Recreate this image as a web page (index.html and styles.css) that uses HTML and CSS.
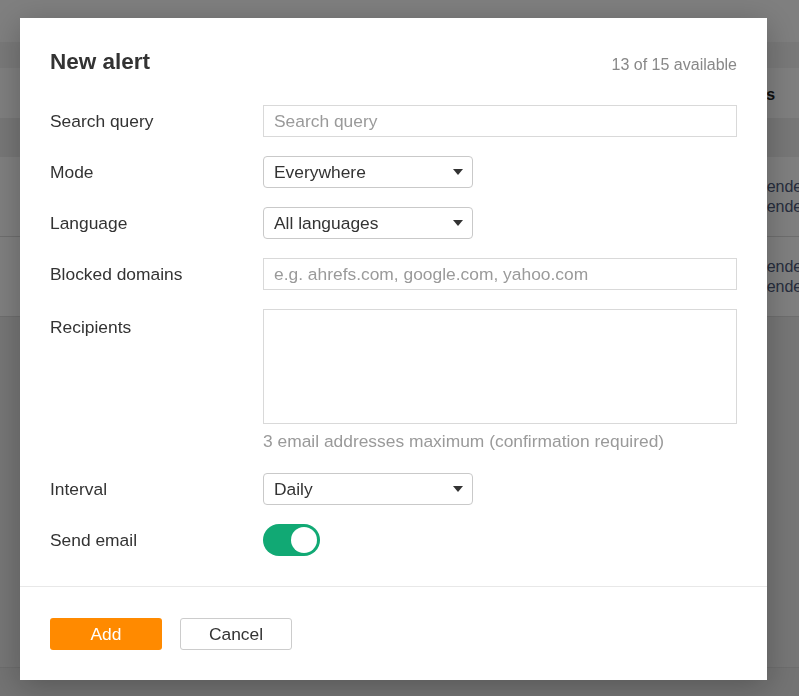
FILE: index.html
```html
<!DOCTYPE html>
<html lang="en">
<head>
<meta charset="utf-8">
<title>New alert</title>
<link rel="stylesheet" href="styles.css">
</head>
<body>
<div class="page">
  <div class="topbar"></div>
  <div class="band"></div>
  <div class="thead"><span class="th">Mentions</span></div>
  <div class="band2"></div>
  <div class="trow"><div class="cell"><div>Sender</div><div>Sender</div></div></div>
  <div class="trow"><div class="cell"><div>Sender</div><div>Sender</div></div></div>
  <div class="filler"></div>
</div>
<div class="overlay"></div>
<div class="modal">
  <div class="modal-body">
    <div class="modal-head">
      <h1 class="title">New alert</h1>
      <span class="count">13 of 15 available</span>
    </div>
    <div class="rows">
      <div class="row">
        <div class="label">Search query</div>
        <input class="input" type="text" placeholder="Search query">
      </div>
      <div class="row">
        <div class="label">Mode</div>
        <div class="select-wrap">
          <select class="select"><option>Everywhere</option></select>
          <svg class="arrow" width="10" height="6" viewBox="0 0 10 6"><path d="M0 0h10L5 6z" fill="#333"/></svg>
        </div>
      </div>
      <div class="row">
        <div class="label">Language</div>
        <div class="select-wrap">
          <select class="select"><option>All languages</option></select>
          <svg class="arrow" width="10" height="6" viewBox="0 0 10 6"><path d="M0 0h10L5 6z" fill="#333"/></svg>
        </div>
      </div>
      <div class="row">
        <div class="label">Blocked domains</div>
        <input class="input" type="text" placeholder="e.g. ahrefs.com, google.com, yahoo.com">
      </div>
      <div class="row row-top">
        <div class="label label-top">Recipients</div>
        <div class="field-col">
          <textarea class="textarea"></textarea>
          <div class="hint">3 email addresses maximum (confirmation required)</div>
        </div>
      </div>
      <div class="row">
        <div class="label">Interval</div>
        <div class="select-wrap">
          <select class="select"><option>Daily</option></select>
          <svg class="arrow" width="10" height="6" viewBox="0 0 10 6"><path d="M0 0h10L5 6z" fill="#333"/></svg>
        </div>
      </div>
      <div class="row">
        <div class="label">Send email</div>
        <div class="toggle"><span class="knob"></span></div>
      </div>
    </div>
  </div>
  <div class="modal-foot">
    <button class="btn btn-add" type="button">Add</button>
    <button class="btn btn-cancel" type="button">Cancel</button>
  </div>
</div>
</body>
</html>
```
FILE: styles.css
```css
html, body {
  margin: 0;
  padding: 0;
}
body {
  background: #e6e6e6;
  font-family: "Liberation Sans", Arial, sans-serif;
  height: 696px;
  overflow: hidden;
}
.page {
  width: 100%;
}
.topbar {
  height: 42px;
  background: #ffffff;
}
.band {
  height: 26px;
  background: #f3f3f3;
}
.thead {
  height: 50px;
  background: #ffffff;
  padding-left: 705px;
  box-sizing: border-box;
}
.th {
  display: block;
  font-weight: bold;
  font-size: 16px;
  line-height: 54px;
  color: #222;
  white-space: nowrap;
}
.band2 {
  height: 39px;
  background: #eeeeee;
}
.trow {
  height: 80px;
  box-sizing: border-box;
  background: #ffffff;
  border-bottom: 1px solid #dcdcdc;
  padding-left: 756px;
  display: flex;
  align-items: center;
}
.cell {
  font-size: 16px;
  line-height: 19.5px;
  color: #4e5a7a;
  white-space: nowrap;
}
.filler {
  height: 350px;
  background: #ececec;
  border-bottom: 1px solid #dadada;
}
.overlay {
  position: fixed;
  inset: 0;
  background: rgba(0, 0, 0, 0.5);
}
.modal {
  position: fixed;
  left: 20px;
  top: 18px;
  width: 747px;
  height: 662px;
  background: #ffffff;
  box-shadow: 0 6px 30px rgba(0, 0, 0, 0.25);
  display: flex;
  flex-direction: column;
  color: #333;
  font-family: "Liberation Sans", Arial, sans-serif;
}
.modal-body {
  padding: 31px 30px 30px;
}
.modal-head {
  display: flex;
  justify-content: space-between;
  align-items: baseline;
  height: 26px;
}
.title {
  margin: 0;
  font-size: 22.5px;
  line-height: 26px;
  font-weight: bold;
  color: #333;
}
.count {
  font-size: 16px;
  color: #888;
  position: relative;
  top: 1px;
}
.rows {
  margin-top: 30px;
  display: flex;
  flex-direction: column;
  gap: 19px;
}
.row {
  display: flex;
  align-items: center;
  min-height: 32px;
}
.row-top {
  align-items: flex-start;
}
.label {
  width: 213px;
  flex: none;
  font-size: 17.4px;
  line-height: 32px;
  color: #333;
}
.label-top {
  padding-top: 2px;
}
.input {
  width: 474px;
  height: 32px;
  box-sizing: border-box;
  border: 1px solid #d9d9d9;
  border-radius: 0;
  padding: 0 10px;
  margin: 0;
  font-family: "Liberation Sans", Arial, sans-serif;
  font-size: 17.4px;
  color: #333;
  outline: none;
}
.input::placeholder {
  color: #9a9a9a;
}
.select-wrap {
  position: relative;
  width: 210px;
  height: 32px;
}
.select {
  appearance: none;
  -webkit-appearance: none;
  width: 210px;
  height: 32px;
  box-sizing: border-box;
  border: 1px solid #c9c9c9;
  border-radius: 4px;
  background: #ffffff;
  padding: 0 10px;
  margin: 0;
  font-family: "Liberation Sans", Arial, sans-serif;
  font-size: 17.4px;
  color: #333;
  outline: none;
}
.arrow {
  position: absolute;
  right: 10px;
  top: 13px;
  pointer-events: none;
}
.field-col {
  display: flex;
  flex-direction: column;
}
.textarea {
  width: 474px;
  height: 115px;
  box-sizing: border-box;
  border: 1px solid #d9d9d9;
  border-radius: 0;
  margin: 0;
  padding: 6px 10px;
  resize: none;
  font-family: "Liberation Sans", Arial, sans-serif;
  font-size: 17.4px;
  outline: none;
  display: block;
}
.hint {
  margin-top: 4px;
  font-size: 17.4px;
  line-height: 26px;
  color: #9a9a9a;
  white-space: nowrap;
}
.toggle {
  width: 57px;
  height: 32px;
  box-sizing: border-box;
  border-radius: 16px;
  background: #11a974;
  padding: 3px;
  display: flex;
  justify-content: flex-end;
  align-items: center;
}
.knob {
  width: 26px;
  height: 26px;
  border-radius: 50%;
  background: #ffffff;
}
.modal-foot {
  border-top: 1px solid #e8e8e8;
  padding: 31px 30px 30px;
  display: flex;
  gap: 18px;
}
.btn {
  width: 112px;
  height: 32px;
  box-sizing: border-box;
  border-radius: 3px;
  margin: 0;
  padding: 0;
  font-family: "Liberation Sans", Arial, sans-serif;
  font-size: 17.4px;
  cursor: pointer;
}
.btn-add {
  background: #ff8a00;
  border: none;
  color: #ffffff;
}
.btn-cancel {
  background: #ffffff;
  border: 1px solid #cccccc;
  color: #333;
}
```
